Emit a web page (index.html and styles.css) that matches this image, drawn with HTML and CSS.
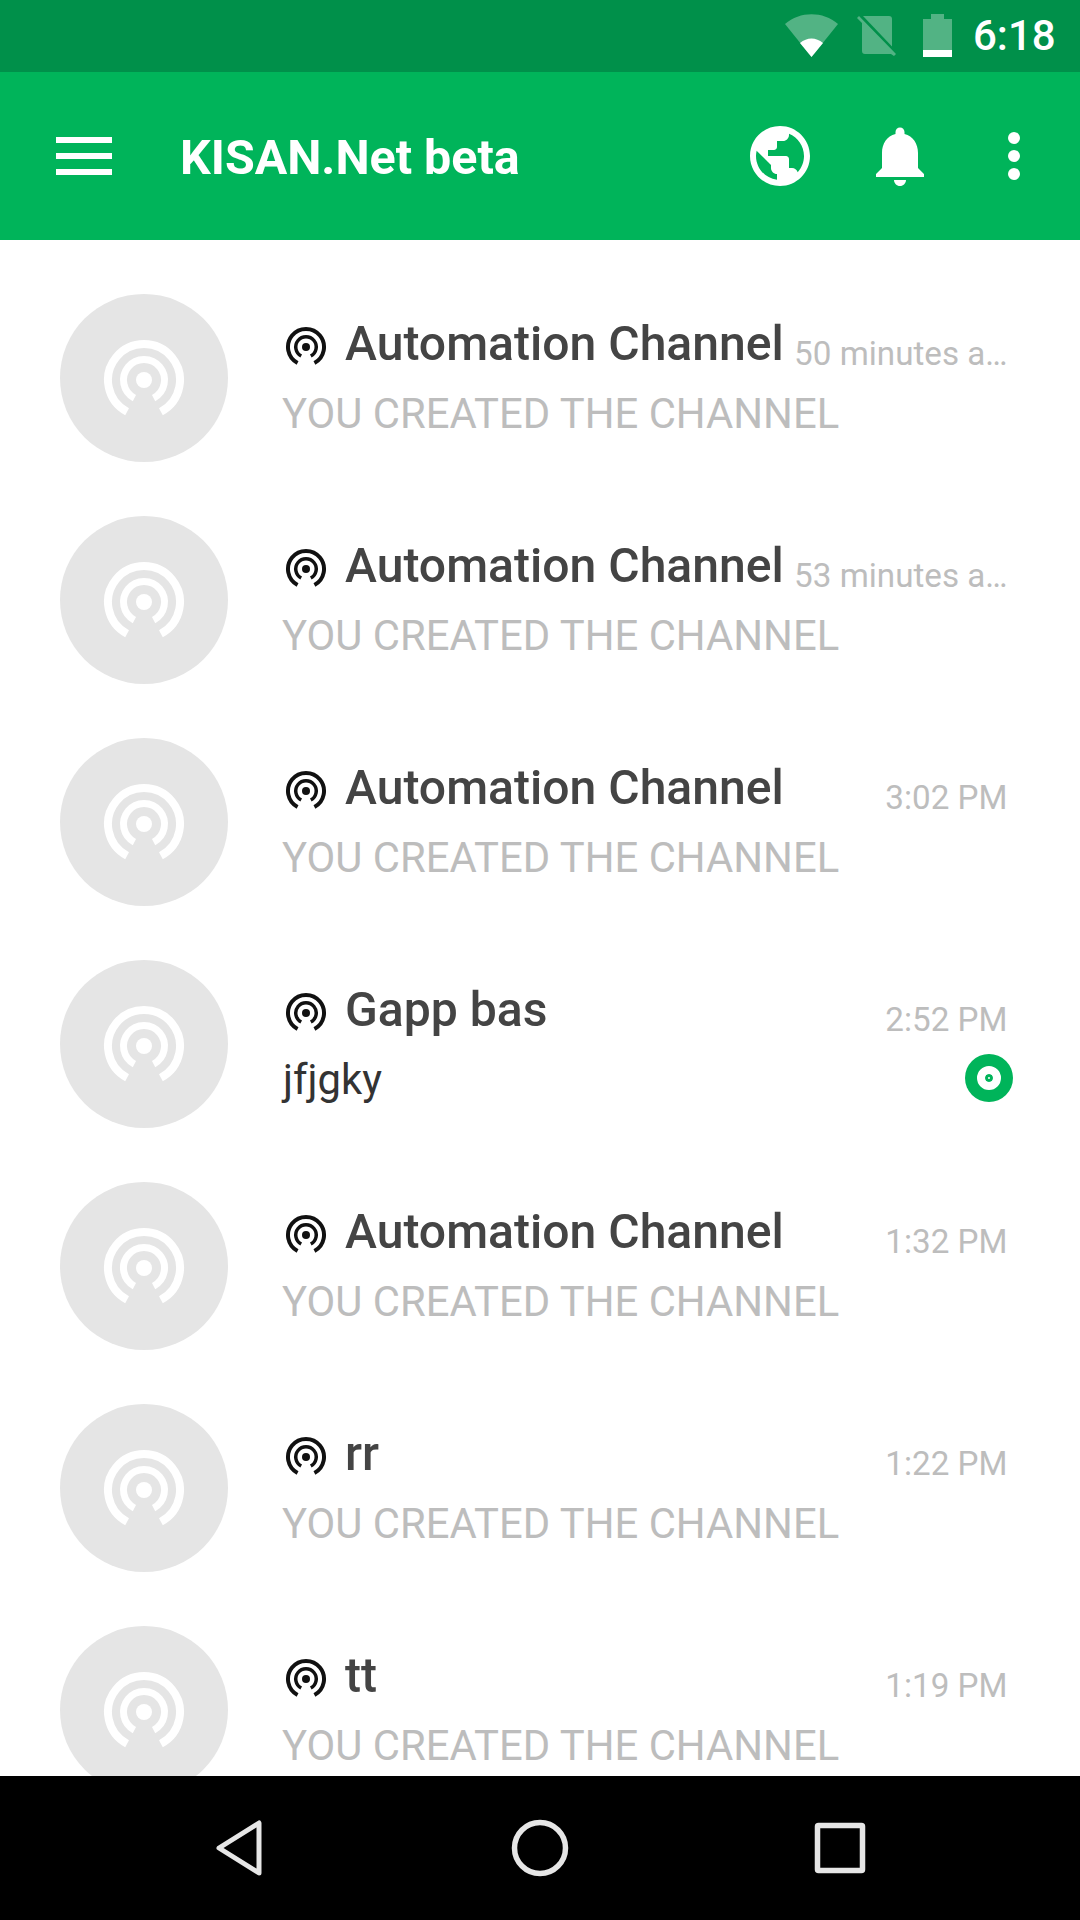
FILE: index.html
```html
<!DOCTYPE html>
<html lang="en">
<head>
    <meta charset="UTF-8">
    <meta name="viewport" content="width=device-width, initial-scale=1.0">
    <title>KISAN.Net beta</title>
    <link rel="stylesheet" href="styles.css">
</head>
<body>
    <svg class="defs" width="0" height="0">
        <symbol id="channel" viewBox="-42 -42 84 84">
            <circle cx="0" cy="0" r="8" fill="currentColor"/>
            <path d="M-9.6 18.1A20.5 20.5 0 1 1 9.6 18.1" fill="none" stroke="currentColor" stroke-width="7"/>
            <path d="M-16.9 31.8A36 36 0 1 1 16.9 31.8" fill="none" stroke="currentColor" stroke-width="8"/>
        </symbol>
    </svg>

    <div class="phone">
        <div class="status-bar">
            <svg class="wifi" width="53" height="43" viewBox="0 0 53 43">
                <path d="M26.5 43L0 10C15-3 38-3 53 10z" fill="#fff" fill-opacity=".32"/>
                <path d="M26.5 43L15 29C22 23 31 23 38 29z" fill="#fff"/>
            </svg>
            <svg class="sim" width="39" height="41" viewBox="0 0 39 41">
                <path d="M0 2L2 0L39 38L37 40L34 38H8a3 3 0 0 1-3-3V7z" fill="#fff" fill-opacity=".32"/>
                <path d="M6 0H32a3 3 0 0 1 3 3V30.5z" fill="#fff" fill-opacity=".32"/>
            </svg>
            <svg class="battery" width="29" height="43" viewBox="0 0 29 43">
                <path d="M8 0H21V5H29V36H0V5H8z" fill="#fff" fill-opacity=".32"/>
                <rect x="0" y="36" width="29" height="7" fill="#fff"/>
            </svg>
            <span class="clock">6:18</span>
        </div>

        <header class="toolbar">
            <div class="menu-icon"><span></span><span></span><span></span></div>
            <h1 class="app-title">KISAN.Net beta</h1>
            <svg class="tool-icon" width="72" height="72" viewBox="0 0 24 24"><path fill="#fff" d="M12 2C6.48 2 2 6.48 2 12s4.48 10 10 10 10-4.48 10-10S17.52 2 12 2zm-1 17.93c-3.95-.49-7-3.85-7-7.93 0-.62.08-1.21.21-1.79L9 15v1c0 1.1.9 2 2 2v1.93zm6.9-2.54c-.26-.81-1-1.39-1.9-1.39h-1v-3c0-.55-.45-1-1-1H8v-2h2c.55 0 1-.45 1-1V7h2c1.1 0 2-.9 2-2v-.41c2.93 1.19 5 4.06 5 7.41 0 2.08-.8 3.97-2.1 5.39z"/></svg>
            <svg class="tool-icon" width="72" height="72" viewBox="0 0 24 24"><path fill="#fff" d="M12 22c1.1 0 2-.9 2-2h-4c0 1.1.89 2 2 2zm6-6v-5c0-3.07-1.64-5.64-4.5-6.32V4c0-.83-.67-1.5-1.5-1.5s-1.5.67-1.5 1.5v.68C7.63 5.36 6 7.92 6 11v5l-2 2v1h16v-1l-2-2z"/></svg>
            <svg class="tool-icon" width="72" height="72" viewBox="0 0 24 24"><g fill="#fff"><circle cx="12" cy="6" r="2"/><circle cx="12" cy="12" r="2"/><circle cx="12" cy="18" r="2"/></g></svg>
        </header>

        <main class="channel-list">
            <div class="channel">
                <div class="avatar"><svg width="84" height="84"><use href="#channel"/></svg></div>
                <div class="channel-body">
                    <div class="channel-top">
                        <svg class="mini" width="42" height="42"><use href="#channel"/></svg>
                        <span class="channel-name">Automation Channel</span>
                        <span class="channel-time">50 minutes a…</span>
                    </div>
                    <div class="channel-bottom"><span class="channel-msg">YOU CREATED THE CHANNEL</span></div>
                </div>
            </div>
            <div class="channel">
                <div class="avatar"><svg width="84" height="84"><use href="#channel"/></svg></div>
                <div class="channel-body">
                    <div class="channel-top">
                        <svg class="mini" width="42" height="42"><use href="#channel"/></svg>
                        <span class="channel-name">Automation Channel</span>
                        <span class="channel-time">53 minutes a…</span>
                    </div>
                    <div class="channel-bottom"><span class="channel-msg">YOU CREATED THE CHANNEL</span></div>
                </div>
            </div>
            <div class="channel">
                <div class="avatar"><svg width="84" height="84"><use href="#channel"/></svg></div>
                <div class="channel-body">
                    <div class="channel-top">
                        <svg class="mini" width="42" height="42"><use href="#channel"/></svg>
                        <span class="channel-name">Automation Channel</span>
                        <span class="channel-time">3:02 PM</span>
                    </div>
                    <div class="channel-bottom"><span class="channel-msg">YOU CREATED THE CHANNEL</span></div>
                </div>
            </div>
            <div class="channel">
                <div class="avatar"><svg width="84" height="84"><use href="#channel"/></svg></div>
                <div class="channel-body">
                    <div class="channel-top">
                        <svg class="mini" width="42" height="42"><use href="#channel"/></svg>
                        <span class="channel-name">Gapp bas</span>
                        <span class="channel-time">2:52 PM</span>
                    </div>
                    <div class="channel-bottom">
                        <span class="channel-msg unread">jfjgky</span>
                        <span class="badge"><span class="badge-dot"></span></span>
                    </div>
                </div>
            </div>
            <div class="channel">
                <div class="avatar"><svg width="84" height="84"><use href="#channel"/></svg></div>
                <div class="channel-body">
                    <div class="channel-top">
                        <svg class="mini" width="42" height="42"><use href="#channel"/></svg>
                        <span class="channel-name">Automation Channel</span>
                        <span class="channel-time">1:32 PM</span>
                    </div>
                    <div class="channel-bottom"><span class="channel-msg">YOU CREATED THE CHANNEL</span></div>
                </div>
            </div>
            <div class="channel">
                <div class="avatar"><svg width="84" height="84"><use href="#channel"/></svg></div>
                <div class="channel-body">
                    <div class="channel-top">
                        <svg class="mini" width="42" height="42"><use href="#channel"/></svg>
                        <span class="channel-name">rr</span>
                        <span class="channel-time">1:22 PM</span>
                    </div>
                    <div class="channel-bottom"><span class="channel-msg">YOU CREATED THE CHANNEL</span></div>
                </div>
            </div>
            <div class="channel">
                <div class="avatar"><svg width="84" height="84"><use href="#channel"/></svg></div>
                <div class="channel-body">
                    <div class="channel-top">
                        <svg class="mini" width="42" height="42"><use href="#channel"/></svg>
                        <span class="channel-name">tt</span>
                        <span class="channel-time">1:19 PM</span>
                    </div>
                    <div class="channel-bottom"><span class="channel-msg">YOU CREATED THE CHANNEL</span></div>
                </div>
            </div>
        </main>

        <nav class="nav-bar">
            <svg width="54" height="60" viewBox="0 0 54 60"><path d="M46 5V55L6 30z" fill="none" stroke="#e6e6e6" stroke-width="5" stroke-linejoin="round"/></svg>
            <svg width="60" height="60" viewBox="0 0 60 60"><circle cx="30" cy="30" r="25.5" fill="none" stroke="#e6e6e6" stroke-width="5.5"/></svg>
            <svg width="54" height="54" viewBox="0 0 54 54"><rect x="4.5" y="4.5" width="45" height="45" rx="1" fill="none" stroke="#e6e6e6" stroke-width="5.5"/></svg>
        </nav>
    </div>
</body>
</html>
```

FILE: styles.css
```css
body {
    margin: 0;
    font-family: Roboto, sans-serif;
    background-color: #fff;
}

.defs {
    position: absolute;
}

.phone {
    width: 1080px;
    height: 1920px;
    display: flex;
    flex-direction: column;
    overflow: hidden;
}

.status-bar {
    height: 72px;
    flex: none;
    display: flex;
    align-items: center;
    background-color: #00904a;
    padding-left: 785px;
    box-sizing: border-box;
}

.wifi {
    margin-top: -1px;
}

.sim {
    margin-left: 19px;
    margin-top: 1px;
}

.battery {
    margin-left: 27px;
    margin-top: -1px;
}

.clock {
    margin-left: 21px;
    color: #fff;
    font-size: 42px;
    font-weight: 500;
    line-height: 72px;
}

.toolbar {
    height: 168px;
    flex: none;
    display: flex;
    align-items: center;
    background-color: #00b45a;
    padding: 0 30px 0 56px;
    box-sizing: border-box;
}

.menu-icon {
    width: 56px;
    display: flex;
    flex-direction: column;
    gap: 10px;
    margin-right: 68px;
}

.menu-icon span {
    height: 6px;
    background-color: #fff;
}

.app-title {
    flex: 1;
    margin: 2px 0 0;
    color: #fff;
    font-size: 48.4px;
    font-weight: 700;
}

.tool-icon {
    margin-left: 48px;
}

.tool-icon:last-child {
    margin-left: 42px;
}

.channel-list {
    flex: 1;
    overflow: hidden;
    padding-top: 27px;
    min-height: 0;
}

.channel {
    height: 222px;
    box-sizing: border-box;
    display: flex;
    padding: 27px 72.5px 27px 60px;
}

.avatar {
    width: 168px;
    height: 168px;
    flex: none;
    border-radius: 50%;
    background-color: #e5e5e5;
    color: #fff;
    display: flex;
    align-items: center;
    justify-content: center;
}

.avatar svg {
    margin-top: 4px;
}

.channel-body {
    flex: 1;
    min-width: 0;
    margin-left: 54px;
    padding-top: 21px;
}

.channel-top {
    display: flex;
    align-items: center;
    height: 56px;
}

.mini {
    flex: none;
    color: #111;
    margin: 8px 18px 0 3px;
}

.channel-name {
    flex: 1;
    color: #444;
    font-size: 48.1px;
    font-weight: 500;
    white-space: nowrap;
}

.channel-time {
    color: #bdbdbd;
    font-size: 33.2px;
    margin-top: 20px;
    white-space: nowrap;
}

.channel-bottom {
    display: flex;
    align-items: center;
    justify-content: space-between;
    height: 56px;
    margin-top: 14px;
}

.channel-msg {
    color: #bdbdbd;
    font-size: 41.8px;
}

.channel-msg.unread {
    margin-left: 1px;
    color: #333;
}

.badge {
    width: 48px;
    height: 48px;
    margin: -2px -5px 0 0;
    border-radius: 50%;
    background-color: #00b45a;
    display: flex;
    align-items: center;
    justify-content: center;
}

.badge-dot {
    width: 8px;
    height: 8px;
    border: 8px solid #fff;
    border-radius: 50%;
    background-color: #fff;
    box-shadow: inset 0 0 0 3px #00b45a;
}

.nav-bar {
    height: 144px;
    flex: none;
    background-color: #000;
    display: flex;
    align-items: center;
    justify-content: space-between;
    padding: 0 213px 0 213px;
    box-sizing: border-box;
}
```
